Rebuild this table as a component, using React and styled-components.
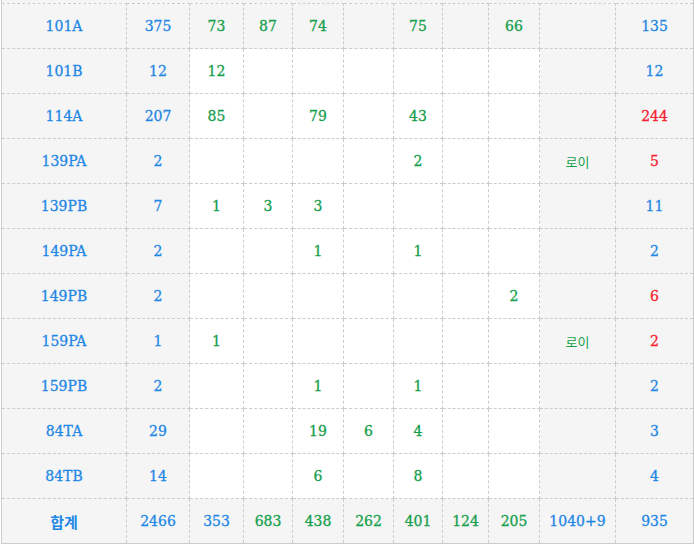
import React from 'react';
import styled, {createGlobalStyle} from 'styled-components';

const GlobalStyle = createGlobalStyle`
    body {
        margin: 0;
        background: #ffffff;
        font-family: "DejaVu Serif", "Liberation Serif", serif;
    }
`;

const widths = [125, 63, 54, 49, 51, 50, 49, 46, 51, 76, 78];

// '!' marks a red total ; '' = empty cell
const rows = [
    ['101A', '375', '73', '87', '74', '', '75', '', '66', '', '135'],
    ['101B', '12', '12', '', '', '', '', '', '', '', '12'],
    ['114A', '207', '85', '', '79', '', '43', '', '', '', '!244'],
    ['139PA', '2', '', '', '', '', '2', '', '', '로이', '!5'],
    ['139PB', '7', '1', '3', '3', '', '', '', '', '', '11'],
    ['149PA', '2', '', '', '1', '', '1', '', '', '', '2'],
    ['149PB', '2', '', '', '', '', '', '', '2', '', '!6'],
    ['159PA', '1', '1', '', '', '', '', '', '', '로이', '!2'],
    ['159PB', '2', '', '', '1', '', '1', '', '', '', '2'],
    ['84TA', '29', '', '', '19', '6', '4', '', '', '', '3'],
    ['84TB', '14', '', '', '6', '', '8', '', '', '', '4'],
];

const total = ['합계', '2466', '353', '683', '438', '262', '401', '124', '205', '1040+9', '935'];

const shaded = [0, 1, 9, 10];

const toneOf = (col, text) => {
    if (text.startsWith('!')) return 'red';
    if (col <= 1 || col === 10) return 'blue';
    return 'green';
};

const totalTone = col => (col <= 2 || col >= 9 ? 'blue' : 'green');

const App = () => (
    <>
        <GlobalStyle />
        <Page>
            <TopStrip />
            <Table>
                <colgroup>
                    {widths.map((w, i) => (
                        <col key={i} style={{width: w}} />
                    ))}
                </colgroup>
                <tbody>
                    {rows.map((row, r) => (
                        <Row key={r} $hover={r === 0}>
                            {row.map((text, c) => (
                                <Cell
                                    key={c}
                                    $shaded={shaded.includes(c)}
                                    $tone={toneOf(c, text)}
                                    $note={c === 9}
                                >
                                    {text.replace('!', '')}
                                </Cell>
                            ))}
                        </Row>
                    ))}
                    <Row $hover>
                        {total.map((text, c) => (
                            <Cell key={c} $tone={totalTone(c)} $label={c === 0}>
                                {text}
                            </Cell>
                        ))}
                    </Row>
                </tbody>
            </Table>
        </Page>
    </>
);

export default App;

const Page = styled.div`
    width: 693px;
    margin-left: 1px;
`;

const TopStrip = styled.div`
    height: 3px;
    background: #f5f5f5;
    border-left: 1px solid #cccccc;
    border-right: 1px solid #cccccc;
    box-sizing: border-box;
`;

const Table = styled.table`
    width: 693px;
    table-layout: fixed;
    border-collapse: collapse;
    border: 1px solid #cccccc;
    border-top: none;
`;

const Row = styled.tr`
    background: ${p => (p.$hover ? '#f5f5f5' : '#ffffff')};
`;

const colors = {
    blue: '#1f87e5',
    green: '#15a04c',
    red: '#f5222f',
};

const Cell = styled.td`
    height: 44px;
    padding: 0;
    border: 1px dashed #cccccc;
    text-align: center;
    vertical-align: middle;
    background: ${p => (p.$shaded ? '#f5f5f5' : 'transparent')};
    color: ${p => colors[p.$tone]};
    font-size: 14px;
    font-family: "DejaVu Serif", "Liberation Serif", serif;
    -webkit-text-stroke: 0.3px currentColor;
    ${p =>
        p.$note &&
        `
        font-size: 13px;
        font-family: "Noto Sans CJK KR", "Noto Sans", sans-serif;
        -webkit-text-stroke: 0;
    `}
    ${p =>
        p.$label &&
        `
        font-size: 15px;
        font-weight: 700;
        font-family: "Noto Sans CJK KR", "Noto Sans", sans-serif;
        -webkit-text-stroke: 0;
    `}
`;
